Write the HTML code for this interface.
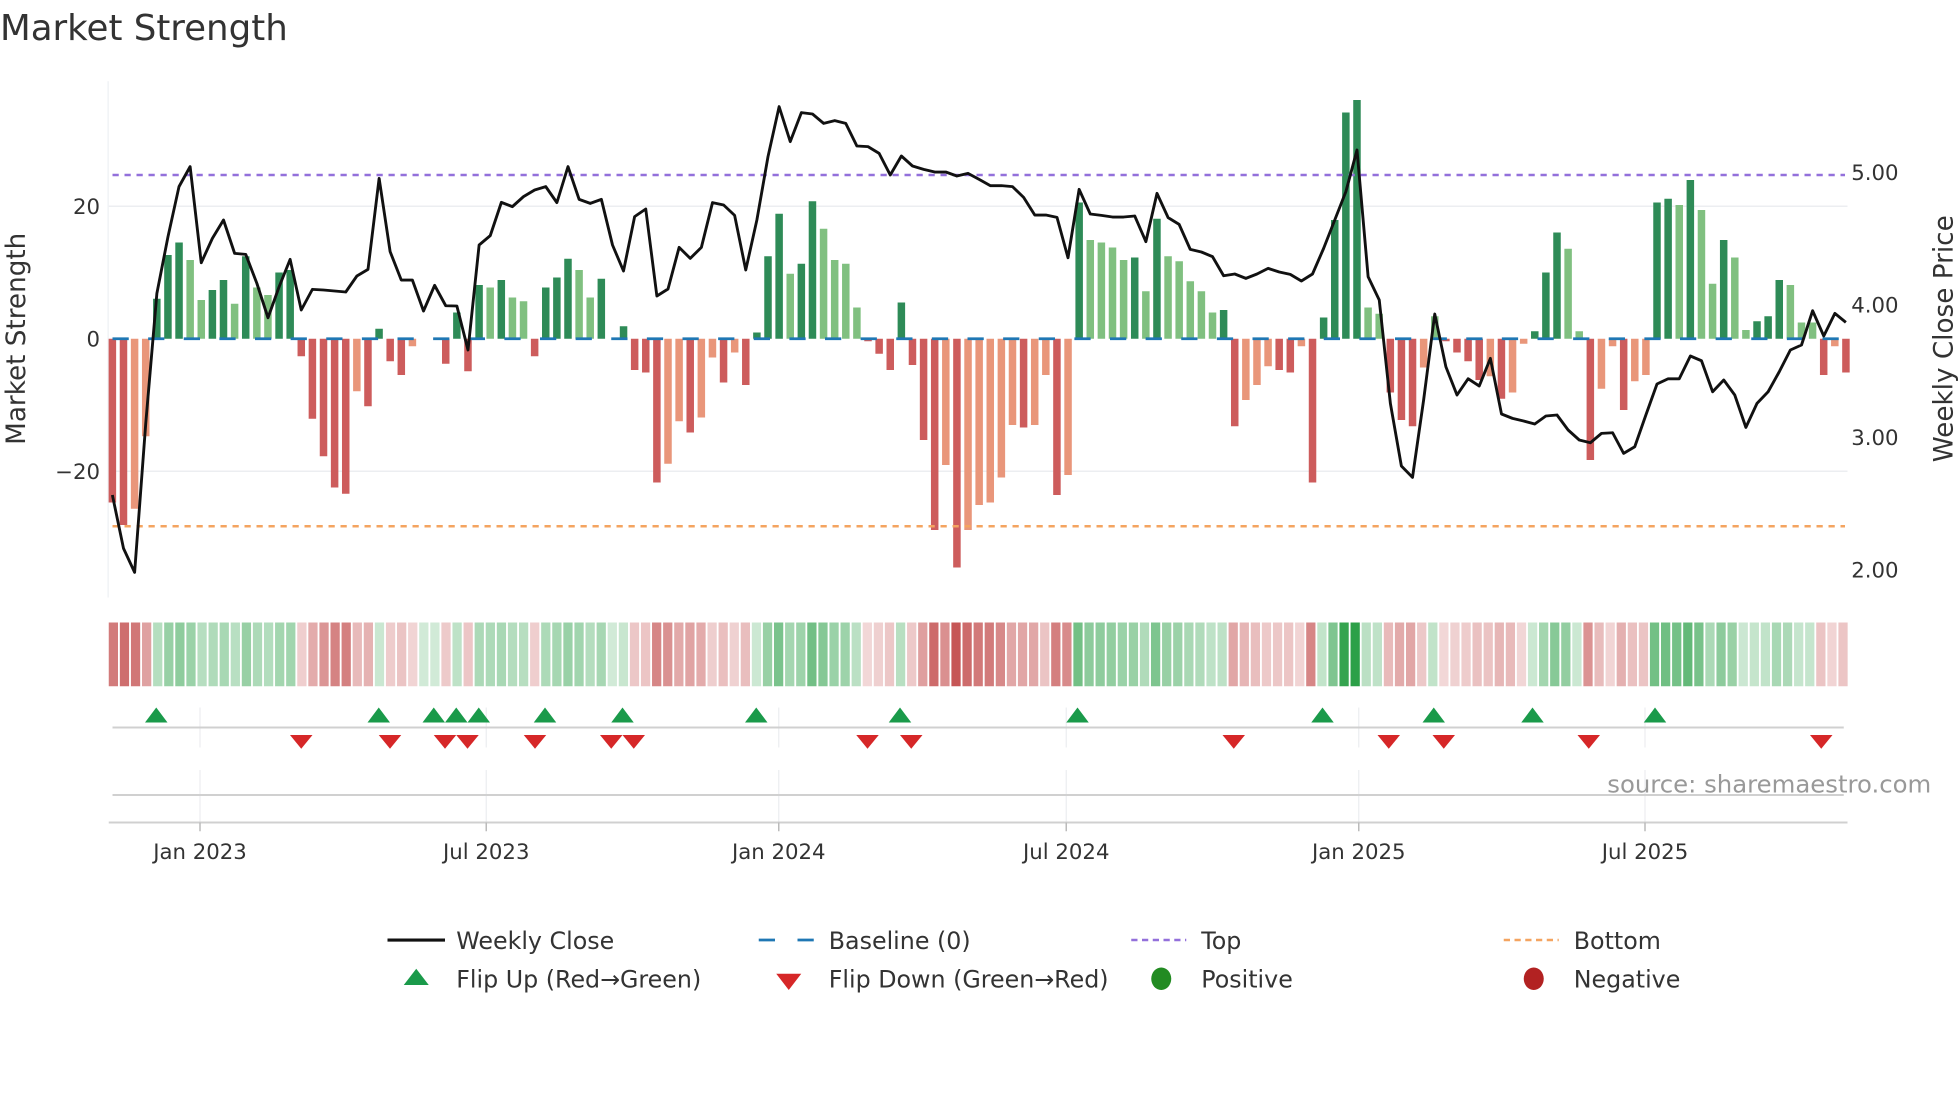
<!DOCTYPE html>
<html><head><meta charset="utf-8">
<style>
html,body{margin:0;padding:0;background:#fff;}
svg{display:block;font-family:"DejaVu Sans","Liberation Sans",sans-serif;}
</style></head>
<body>
<svg id="s" width="1960" height="1102" viewBox="0 0 1568 881.6" preserveAspectRatio="none" xmlns="http://www.w3.org/2000/svg">
<rect width="1568" height="882" fill="#fff"/>
<text x="0" y="32" font-size="28.5" fill="#333">Market Strength</text>
<line x1="86.5" y1="65" x2="86.5" y2="478" stroke="#eef0f4" stroke-width="1"/>
<line x1="87" y1="165" x2="1478" y2="165" stroke="#eceef1" stroke-width="1.2"/>
<line x1="87" y1="377" x2="1478" y2="377" stroke="#eceef1" stroke-width="1.2"/>
<g id="bars"></g>
<line x1="90" y1="271" x2="1476" y2="271" stroke="#1f77b4" stroke-width="2.2" stroke-dasharray="13,15.5"/>
<line x1="90" y1="140" x2="1476" y2="140" stroke="#9370db" stroke-width="2" stroke-dasharray="5,4.6"/>
<line x1="90" y1="421" x2="1476" y2="421" stroke="#f4a460" stroke-width="2" stroke-dasharray="5,4.6"/>
<polyline id="line" fill="none" stroke="#111" stroke-width="2.3" stroke-linejoin="round"/>
<g font-size="17" fill="#333">
<text x="80" y="171" text-anchor="end">20</text>
<text x="80" y="277" text-anchor="end">0</text>
<text x="80" y="383" text-anchor="end">−20</text>
<text x="1481" y="144">5.00</text>
<text x="1481" y="250">4.00</text>
<text x="1481" y="356">3.00</text>
<text x="1481" y="462">2.00</text>
</g>
<text transform="translate(20,271) rotate(-90)" text-anchor="middle" font-size="21" fill="#333">Market Strength</text>
<text transform="translate(1562,271) rotate(-90)" text-anchor="middle" font-size="21" fill="#333">Weekly Close Price</text>
<g id="heat"></g>
<g stroke="#eceef1" stroke-width="1">
<line x1="160" y1="566" x2="160" y2="598"/><line x1="389" y1="566" x2="389" y2="598"/><line x1="623" y1="566" x2="623" y2="598"/><line x1="853" y1="566" x2="853" y2="598"/><line x1="1087" y1="566" x2="1087" y2="598"/><line x1="1316" y1="566" x2="1316" y2="598"/>
<line x1="160" y1="616" x2="160" y2="658"/><line x1="389" y1="616" x2="389" y2="658"/><line x1="623" y1="616" x2="623" y2="658"/><line x1="853" y1="616" x2="853" y2="658"/><line x1="1087" y1="616" x2="1087" y2="658"/><line x1="1316" y1="616" x2="1316" y2="658"/>
</g>
<line x1="90" y1="582" x2="1475" y2="582" stroke="#d0d0d0" stroke-width="1.6"/>
<line x1="90" y1="636" x2="1475" y2="636" stroke="#d0d0d0" stroke-width="1.6"/>
<line x1="87" y1="658" x2="1478" y2="658" stroke="#d0d0d0" stroke-width="1.6"/>
<g stroke="#bbb" stroke-width="1.2">
<line x1="160" y1="658" x2="160" y2="665"/><line x1="389" y1="658" x2="389" y2="665"/><line x1="623" y1="658" x2="623" y2="665"/><line x1="853" y1="658" x2="853" y2="665"/><line x1="1087" y1="658" x2="1087" y2="665"/><line x1="1316" y1="658" x2="1316" y2="665"/>
</g>
<g id="marks"></g>
<text x="1545" y="634" text-anchor="end" font-size="19.5" fill="#999">source: sharemaestro.com</text>
<g font-size="17" fill="#333" text-anchor="middle">
<text x="160" y="687">Jan 2023</text><text x="389" y="687">Jul 2023</text><text x="623" y="687">Jan 2024</text><text x="853" y="687">Jul 2024</text><text x="1087" y="687">Jan 2025</text><text x="1316" y="687">Jul 2025</text>
</g>
<g font-size="19" fill="#333">
<line x1="310" y1="752" x2="356" y2="752" stroke="#111" stroke-width="2.5"/>
<text x="365" y="759">Weekly Close</text>
<line x1="607" y1="752" x2="651" y2="752" stroke="#1f77b4" stroke-width="2.2" stroke-dasharray="13,18"/>
<text x="663" y="759">Baseline (0)</text>
<line x1="905" y1="752" x2="949" y2="752" stroke="#9370db" stroke-width="2" stroke-dasharray="5,3.6"/>
<text x="961" y="759">Top</text>
<line x1="1203" y1="752" x2="1247" y2="752" stroke="#f4a460" stroke-width="2" stroke-dasharray="5,3.6"/>
<text x="1259" y="759">Bottom</text>
<polygon points="333,775 343,788 323,788" fill="#1a9a4a"/>
<text x="365" y="790">Flip Up (Red→Green)</text>
<polygon points="621,779 641,779 631,792" fill="#d62728"/>
<text x="663" y="790">Flip Down (Green→Red)</text>
<ellipse cx="929" cy="783" rx="8" ry="9" fill="#228b22"/>
<text x="961" y="790">Positive</text>
<ellipse cx="1227" cy="783" rx="8" ry="9" fill="#b22222"/>
<text x="1259" y="790">Negative</text>
</g>
</svg>
<script>
(function(){
var NS="http://www.w3.org/2000/svg";
var B="-131R,-149R,-136O,-78O,32D,67D,77D,63L,31L,39D,47D,28L,66D,41L,35L,53D,55D,-14R,-64R,-94R,-119R,-124R,-42O,-54R,8D,-18R,-29R,-6O,0D,0D,-20R,21D,-26R,43D,41L,47D,33L,30L,-14R,41D,49D,64D,55L,33L,48D,0D,10D,-25R,-27R,-115R,-100O,-66O,-75R,-63O,-15O,-35R,-11O,-37R,5D,66D,100D,52L,60D,110D,88L,63L,60L,25L,-2R,-12R,-25R,29D,-21R,-81R,-153R,-101O,-183R,-153O,-133O,-131O,-111O,-69O,-71R,-69O,-29O,-125R,-109O,109D,79L,77L,73L,63L,65D,38L,96D,66L,62L,46L,38L,21L,23D,-70R,-49O,-37O,-22O,-25R,-27R,-6O,-115R,17D,95D,181D,191D,25L,20L,-43R,-65R,-70R,-23O,18L,-2R,-11R,-18R,-33R,-30O,-48R,-43O,-4O,6D,53D,85D,72L,6L,-97R,-40O,-6O,-57R,-34O,-29O,109D,112D,107L,127D,103L,44L,79D,65L,7L,14D,18D,47D,43L,13L,13L,-29R,-6O,-27R".split(",");
var L=[1215,1375,1447,1000,610,440,290,230,518,445,390,490,493,580,683,590,508,660,598,600,603,606,558,538,265,485,570,570,663,586,647,648,780,465,437,337,350,320,300,290,
338,230,328,340,328,465,543,380,357,618,597,472,505,472,338,345,376,540,390,200,50,155,68,72,100,92,100,168,170,190,255,198,228,238,246,246,258,250,268,287,
287,290,322,375,375,382,503,298,372,376,381,381,378,455,310,383,403,478,486,500,557,552,565,552,535,546,553,573,552,475,390,305,180,560,630,940,1128,1162,930,672,
830,915,866,888,805,972,985,993,1002,978,975,1020,1050,1058,1030,1028,1090,1070,975,882,866,866,798,812,905,870,915,1012,940,905,845,780,765,662,738,670,697];
var col={D:"#2e8b57",L:"#80c080",R:"#cd5c5c",O:"#e9967a"};
var bars=document.getElementById("bars"),heat=document.getElementById("heat");
function mix(c,a){return "rgb("+c.map(function(v){return Math.round(255+(v-255)*a)}).join(",")+")";}
for(var i=0;i<B.length;i++){
 var v=parseFloat(B[i]),c=B[i].slice(-1),x=89.9+8.89*i;
 if(v!==0){var r=document.createElementNS(NS,"rect");
  r.setAttribute("x",(x-3).toFixed(2));r.setAttribute("width","6");
  r.setAttribute("y",v>0?271-v:271);r.setAttribute("height",Math.abs(v));
  r.setAttribute("fill",col[c]);bars.appendChild(r);}
 var h=document.createElementNS(NS,"rect");
 var a=0.22+0.78*Math.min(1,Math.abs(v)/191);
 var base=(v>0||(v===0&&c!=="R"))?[44,160,72]:[196,80,80];
 var hx=87+8.87*i;
 h.setAttribute("x",hx.toFixed(2));h.setAttribute("width","7.4");
 h.setAttribute("y","498");h.setAttribute("height","51");
 h.setAttribute("fill",mix(base,a));heat.appendChild(h);
}
var pts=[];for(var i=0;i<L.length;i++){pts.push((89.9+8.89*i).toFixed(1)+","+(72+L[i]*0.2667).toFixed(1));}
document.getElementById("line").setAttribute("points",pts.join(" "));
var up=[125,303,347,365,383,436,498,605,720,862,1058,1147,1226,1324],dn=[241,312,356,374,428,489,507,694,729,987,1111,1155,1271,1457];
var m=document.getElementById("marks");
up.forEach(function(x){var p=document.createElementNS(NS,"polygon");p.setAttribute("points",x+",566 "+(x+9)+",578 "+(x-9)+",578");p.setAttribute("fill","#1a9a4a");m.appendChild(p);});
dn.forEach(function(x){var p=document.createElementNS(NS,"polygon");p.setAttribute("points",(x-9)+",588 "+(x+9)+",588 "+x+",599");p.setAttribute("fill","#d62728");m.appendChild(p);});
})();
</script>
</body></html>
